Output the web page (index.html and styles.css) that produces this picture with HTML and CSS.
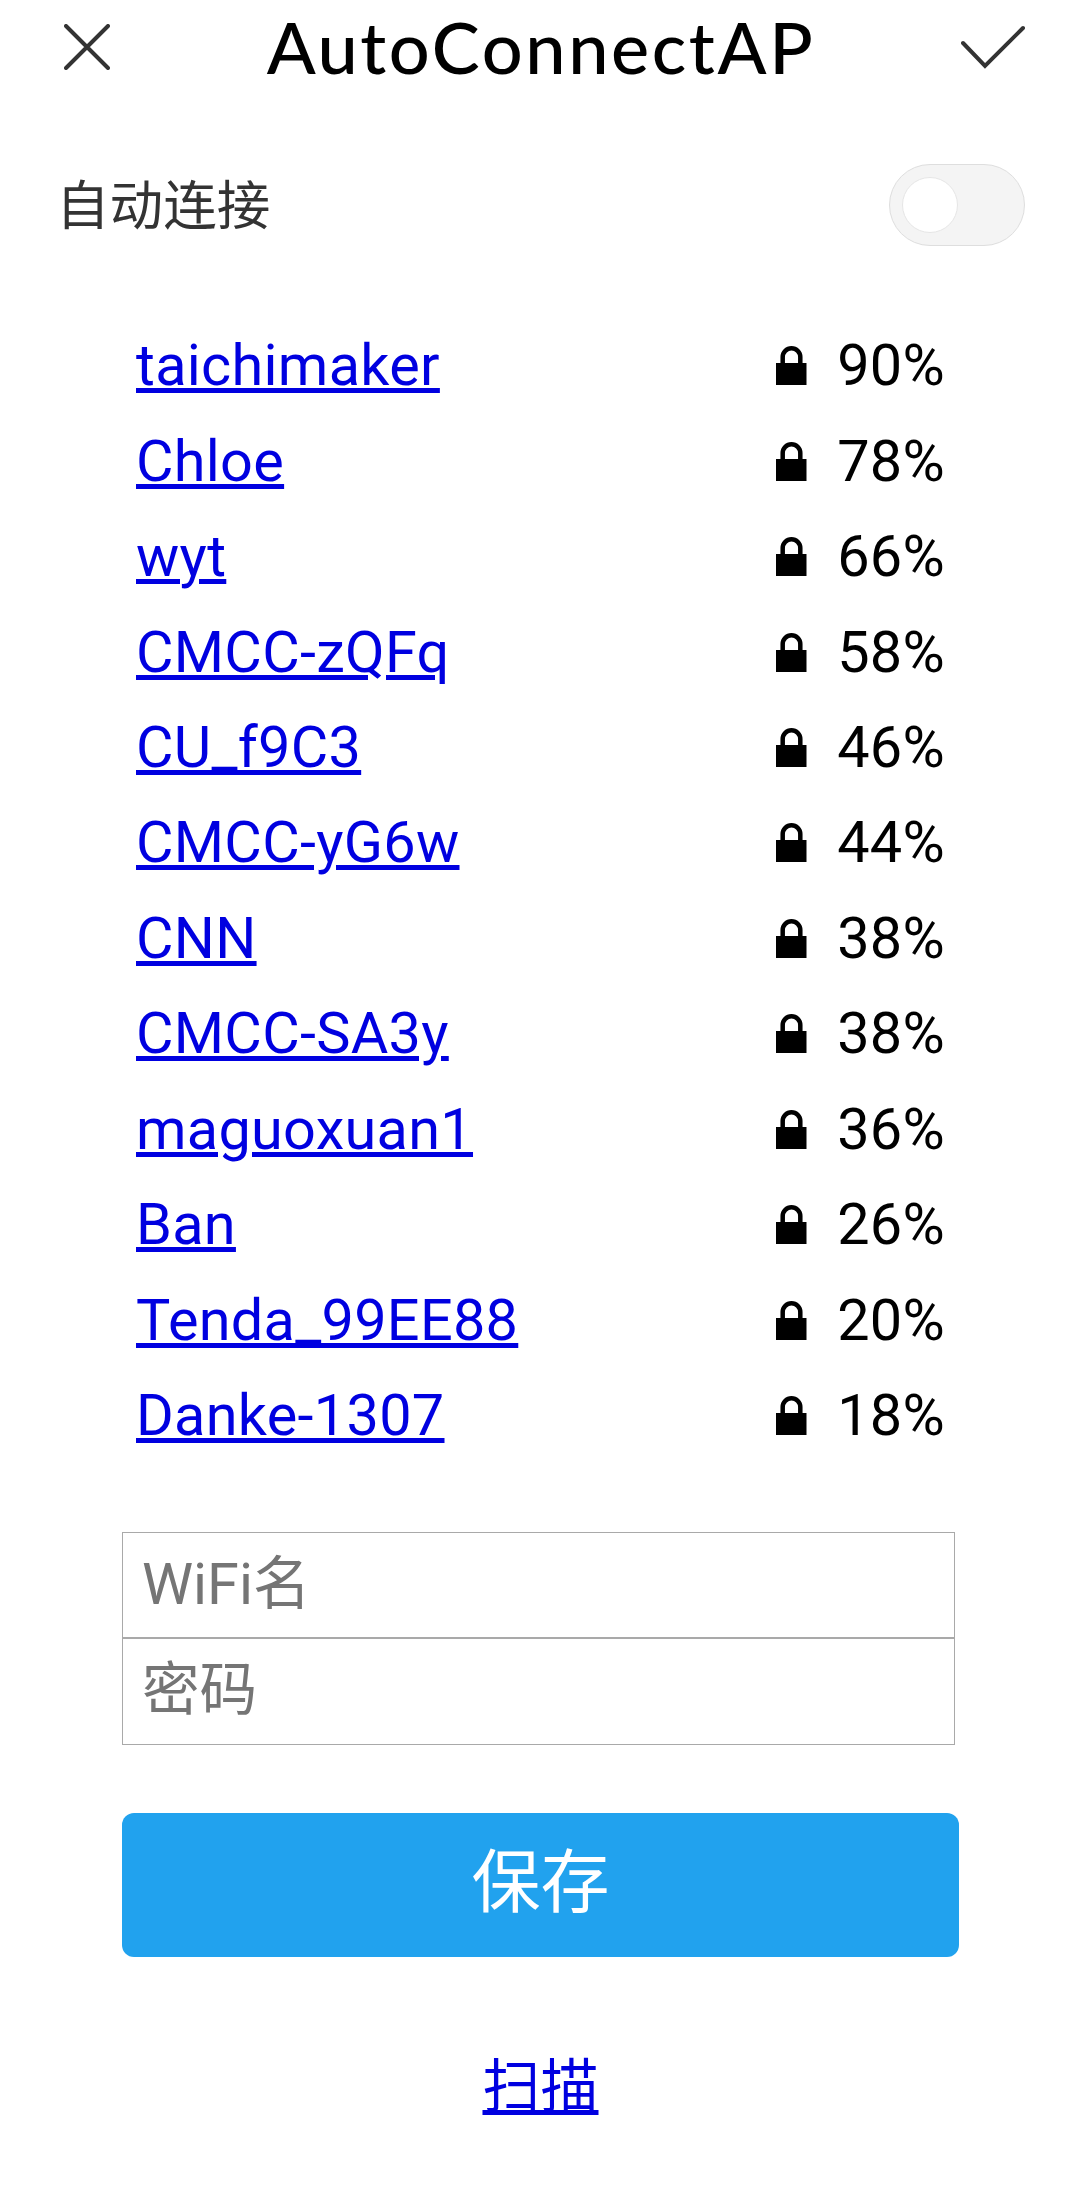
FILE: index.html
```html
<!DOCTYPE html>
<html lang="zh"><head><meta charset="utf-8"><title>AutoConnectAP</title><link rel="stylesheet" href="styles.css"></head>
<body>
<header class="bar">
<svg class="close" viewBox="0 0 46 46"><path d="M2 2 44 44M44 2 2 44"/></svg>
<h1>AutoConnectAP</h1>
<svg class="check" viewBox="0 0 64 46"><path d="M2 19 24 42 62 4"/></svg>
</header>
<div class="auto"><span>自动连接</span><span class="switch"><span class="knob"></span></span></div>
<svg class="defs"><symbol id="lock" viewBox="0 0 31 39"><path d="M0 17H30.5V39H0Z"/><path class="shackle" d="M6.7 18V11.1a8.8 8.8 0 0 1 17.6 0V18"/></symbol></svg>
<main>
<ul class="list">
<li><a href="#">taichimaker</a><svg><use href="#lock"/></svg><span>90%</span></li>
<li><a href="#">Chloe</a><svg><use href="#lock"/></svg><span>78%</span></li>
<li><a href="#">wyt</a><svg><use href="#lock"/></svg><span>66%</span></li>
<li><a href="#">CMCC-zQFq</a><svg><use href="#lock"/></svg><span>58%</span></li>
<li><a href="#">CU_f9C3</a><svg><use href="#lock"/></svg><span>46%</span></li>
<li><a href="#">CMCC-yG6w</a><svg><use href="#lock"/></svg><span>44%</span></li>
<li><a href="#">CNN</a><svg><use href="#lock"/></svg><span>38%</span></li>
<li><a href="#">CMCC-SA3y</a><svg><use href="#lock"/></svg><span>38%</span></li>
<li><a href="#">maguoxuan1</a><svg><use href="#lock"/></svg><span>36%</span></li>
<li><a href="#">Ban</a><svg><use href="#lock"/></svg><span>26%</span></li>
<li><a href="#">Tenda_99EE88</a><svg><use href="#lock"/></svg><span>20%</span></li>
<li><a href="#">Danke-1307</a><svg><use href="#lock"/></svg><span>18%</span></li>
</ul>
<form class="form"><div class="fields"><input placeholder="WiFi名"><input placeholder="密码"></div>
<button type="button">保存</button></form>
<a class="scan" href="#">扫描</a>
</main>
</body></html>
```
FILE: styles.css
```css
*{box-sizing:border-box}
body{margin:0;background:#fff;color:#000;font-family:Roboto,"Noto Sans CJK SC",sans-serif}
.bar{display:flex;justify-content:space-between;align-items:center;height:93px;padding:0 41px 0 64px}
.bar svg{fill:none;stroke:#333;stroke-width:4;stroke-linecap:round}
.close{width:46px;height:46px}
.check{width:64px;height:46px}
h1{margin:0;padding-left:11px;font:500 72px/93px Lato,sans-serif;letter-spacing:2.6px}
.auto{display:flex;justify-content:space-between;align-items:center;height:221px;padding:9px 41px 0 56px;font-size:53.6px;line-height:74px;color:#333}
.auto > span{margin-bottom:3px}
.auto > .switch{margin-bottom:7px}
.switch{width:136px;height:82px;border-radius:41px;background:#f4f4f4;border:1px solid #dedede;padding:12px}
.knob{display:block;width:56px;height:56px;border-radius:50%;background:#fff;border:1px solid #e6e6e6}
.defs{display:none}
main{padding:4px 107px 0 122px}
.list{list-style:none;margin:0;padding:0 14px}
.list li{display:flex;align-items:center;height:95.45px;font-size:57.6px;letter-spacing:.3px}
.list svg{width:31px;height:39px;margin-left:auto;margin-right:30px}
.shackle{fill:none;stroke:#000;stroke-width:4.5}
a{color:#0000e0;text-decoration-thickness:5px;text-underline-offset:3px}
.fields{display:flex;flex-direction:column;width:833px;margin-top:68.4px;border:1px solid #a9a9a9}
input{height:104px;border:0;padding:0 19px 1px;font:57.6px Roboto,"Noto Sans CJK SC",sans-serif;color:#757575}
input + input{height:107px;padding-bottom:2px;border-top:2px solid #a9a9a9}
button{display:block;width:837px;height:144px;margin-top:68px;border:0;border-radius:12px;padding:0 0 16px;background:#21a2ee;color:#fff;font:69px "Noto Sans CJK SC",sans-serif}
.scan{display:block;text-align:center;margin-top:83px;font-size:58px}
```
